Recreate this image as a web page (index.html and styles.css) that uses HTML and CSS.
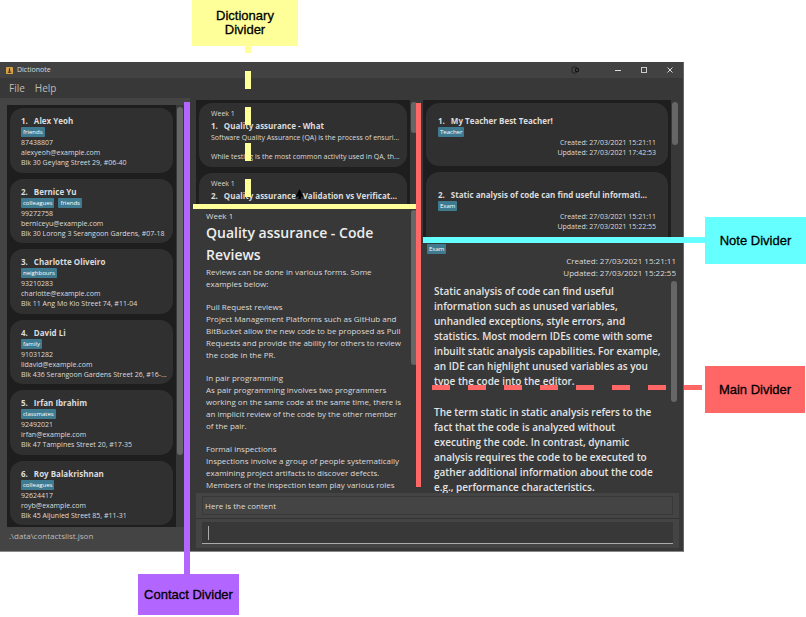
FILE: index.html
```
<!DOCTYPE html>
<html lang="en">
<head>
<meta charset="utf-8">
<title>Dictionote</title>
<link rel="stylesheet" href="styles.css">
</head>
<body>
<div class="page">
  <main class="window">
    <header class="titlebar">
      <svg class="app-icon" viewBox="0 0 8 8"><rect width="8" height="8" rx="1" fill="#d9a34a"/><path d="M4 1.5v3M2 6h4M3 4.5h2" stroke="#3a2a12" stroke-width="1.2"/></svg>
      <span class="app-name">Dictionote</span>
      <svg class="capture" viewBox="0 0 8 8"><rect x="1" y="1" width="5" height="6" rx="1" fill="none" stroke="#222"/><rect x="4" y="2" width="4" height="4" rx="1" fill="#151515"/><rect x="5.500" y="3.500" width="1" height="1" fill="#aaa"/></svg>
      <button class="win-btn" aria-label="Minimize"><svg viewBox="0 0 8 8"><path d="M1 4.5h6" stroke="#ddd"/></svg></button>
      <button class="win-btn" aria-label="Maximize"><svg viewBox="0 0 8 8"><rect x="1.5" y="1.5" width="5" height="5" fill="none" stroke="#ccc"/></svg></button>
      <button class="win-btn" aria-label="Close"><svg viewBox="0 0 8 8"><path d="M1.5 1.5l5 5M6.500 1.500l-5 5" stroke="#ddd"/></svg></button>
    </header>
    <nav class="menubar"><button>File</button><button>Help</button></nav>
    <div class="content">
      <aside class="contacts">
        <div class="scroll-pane">
          <div class="list contact-list">
            <article class="card"><h2><span class="num">1.</span>Alex Yeoh</h2><div class="tags"><span class="tag">friends</span></div><p>87438807</p><p>alexyeoh@example.com</p><p>Blk 30 Geylang Street 29, #06-40</p></article>
            <article class="card"><h2><span class="num">2.</span>Bernice Yu</h2><div class="tags"><span class="tag">colleagues</span><span class="tag">friends</span></div><p>99272758</p><p>berniceyu@example.com</p><p>Blk 30 Lorong 3 Serangoon Gardens, #07-18</p></article>
            <article class="card"><h2><span class="num">3.</span>Charlotte Oliveiro</h2><div class="tags"><span class="tag">neighbours</span></div><p>93210283</p><p>charlotte@example.com</p><p>Blk 11 Ang Mo Kio Street 74, #11-04</p></article>
            <article class="card"><h2><span class="num">4.</span>David Li</h2><div class="tags"><span class="tag">family</span></div><p>91031282</p><p>lidavid@example.com</p><p>Blk 436 Serangoon Gardens Street 26, #16-...</p></article>
            <article class="card"><h2><span class="num">5.</span>Irfan Ibrahim</h2><div class="tags"><span class="tag">classmates</span></div><p>92492021</p><p>irfan@example.com</p><p>Blk 47 Tampines Street 20, #17-35</p></article>
            <article class="card"><h2><span class="num">6.</span>Roy Balakrishnan</h2><div class="tags"><span class="tag">colleagues</span></div><p>92624417</p><p>royb@example.com</p><p>Blk 45 Aljunied Street 85, #11-31</p></article>
          </div>
          <div class="track"><div class="thumb contact-thumb"></div></div>
        </div>
        <footer class="status">.\data\contactslist.json</footer>
      </aside>
      <section class="workspace">
        <div class="panes">
          <section class="dictionary">
            <div class="scroll-pane dict-top">
              <div class="list">
                <article class="card entry"><p>Week 1</p><h2><span class="num">1.</span>Quality assurance - What</h2><p>Software Quality Assurance (QA) is the process of ensuri...</p><p class="spaced">While testing is the most common activity used in QA, th...</p></article>
                <article class="card entry"><p>Week 1</p><h2><span class="num">2.</span>Quality assurance - Validation vs Verificat...</h2></article>
              </div>
              <div class="track"><div class="thumb dict-thumb"></div></div>
            </div>
            <div class="scroll-pane reader">
              <div class="reading">
                <p>Week 1</p>
                <h1>Quality assurance - Code<br>Reviews</h1>
                <p>Reviews can be done in various forms. Some<br>examples below:</p>
                <p>Pull Request reviews<br>Project Management Platforms such as GitHub and<br>BitBucket allow the new code to be proposed as Pull<br>Requests and provide the ability for others to review<br>the code in the PR.</p>
                <p>In pair programming<br>As pair programming involves two programmers<br>working on the same code at the same time, there is<br>an implicit review of the code by the other member<br>of the pair.</p>
                <p>Formal inspections<br>Inspections involve a group of people systematically<br>examining project artifacts to discover defects.<br>Members of the inspection team play various roles</p>
              </div>
              <div class="track"><div class="thumb reader-thumb"></div></div>
            </div>
          </section>
          <section class="notes">
            <div class="scroll-pane note-top">
              <div class="list">
                <article class="card note"><h2><span class="num">1.</span>My Teacher Best Teacher!</h2><div class="tags"><span class="tag">Teacher</span></div><p class="date">Created: 27/03/2021 15:21:11</p><p class="date">Updated: 27/03/2021 17:42:53</p></article>
                <article class="card note tall"><h2><span class="num">2.</span>Static analysis of code can find useful informati...</h2><div class="tags"><span class="tag">Exam</span></div><p class="date">Created: 27/03/2021 15:21:11</p><p class="date">Updated: 27/03/2021 15:22:55</p></article>
              </div>
              <div class="track"><div class="thumb note-thumb"></div></div>
            </div>
            <div class="note-view">
              <div class="tags"><span class="tag">Exam</span></div>
              <p class="stamp">Created: 27/03/2021 15:21:11</p>
              <p class="stamp">Updated: 27/03/2021 15:22:55</p>
              <div class="scroll-pane note-body">
                <div class="note-text">
                  <p>Static analysis of code can find useful<br>information such as unused variables,<br>unhandled exceptions, style errors, and<br>statistics. Most modern IDEs come with some<br>inbuilt static analysis capabilities. For example,<br>an IDE can highlight unused variables as you<br>type the code into the editor.</p>
                  <p>The term static in static analysis refers to the<br>fact that the code is analyzed without<br>executing the code. In contrast, dynamic<br>analysis requires the code to be executed to<br>gather additional information about the code<br>e.g., performance characteristics.</p>
                </div>
                <div class="track"><div class="thumb body-thumb"></div></div>
              </div>
            </div>
          </section>
        </div>
        <div class="result"><output>Here is the content</output></div>
        <div class="command"><input type="text" aria-label="Command"><span class="caret"></span></div>
      </section>
    </div>
  </main>
  <svg class="cursor" viewBox="0 0 8 10"><path d="M4 0L8 8L5.500 7.500V10H3V7.500L0 8Z" fill="#000"/></svg>
  <div class="line dict-stem"></div>
  <div class="line dict-line"></div>
  <div class="line main-line"></div>
  <div class="line main-stem"></div>
  <div class="line contact-line"></div>
  <div class="line note-line"></div>
  <div class="label dict-label">Dictionary<br>Divider</div>
  <div class="label note-label">Note Divider</div>
  <div class="label main-label">Main Divider</div>
  <div class="label contact-label">Contact Divider</div>
</div>
</body>
</html>
```
FILE: styles.css
```
* { box-sizing: border-box; }
body { margin: 0; background: #fff; font-family: "Open Sans", "Noto Sans", sans-serif; }
h1, h2, p { margin: 0; font-weight: inherit; }
button { border: 0; padding: 0; background: none; color: inherit; font: inherit; }

.page { position: relative; display: flex; height: 100vh; min-height: 480px; padding: 62px 122px 65px 0; overflow: hidden; }
.window { flex: 1; min-width: 0; display: flex; flex-direction: column; background: #383838; color: #dcdcdc; border-bottom: 1px solid #888; border-right: 1px solid #666; white-space: nowrap; font-size: 7px; line-height: 10px; }

.titlebar { display: flex; align-items: center; height: 16px; padding: 0 9px 0 6px; background: #424242; }
.app-icon { width: 7px; height: 7px; margin-right: 4px; }
.app-name { flex: 1; }
.capture { width: 8px; height: 8px; margin-right: 35px; }
.win-btn { display: flex; margin-left: 18px; }
.win-btn:first-of-type { margin-left: 0; }
.win-btn svg { width: 8px; height: 8px; }
.menubar { display: flex; gap: 10px; height: 20px; padding: 0 9px; font-size: 10px; color: #bdbdbd; }

.content { flex: 1; min-height: 0; display: flex; gap: 6px; }
.contacts { width: 190px; display: flex; flex-direction: column; padding: 7px 6px 0 7px; background: #444; }
.scroll-pane { flex: 1; min-height: 0; display: flex; overflow: hidden; }
.list { flex: 1; min-width: 0; display: flex; flex-direction: column; gap: 6px; padding: 3px; background: #1e1e1e; overflow: hidden; }
.track { width: 8px; flex-shrink: 0; padding: 2px 1px; background: #383838; }
.thumb { border-radius: 3px; background: #666; }
.contact-list { padding-bottom: 2px; }
.contact-thumb { height: 348px; }
.status { height: 24px; padding: 4px 2px; font-size: 8px; color: #bdbdbd; }

.card { flex-shrink: 0; overflow: hidden; border-radius: 13px; background: #303030; padding: 7px 8px 0 11px; }
.contact-list .card { flex: 1 1 0; min-height: 60px; }
.card h2 { font-size: 8px; font-weight: 700; line-height: 11px; }
.num { margin-right: 6px; }
.tags { display: flex; gap: 4px; height: 12px; padding-top: 1px; }
.tag { height: 10px; padding: 0 2px; border-radius: 1px; background: #3e7b91; color: #fff; font-size: 6px; line-height: 10px; }

.workspace { flex: 1; min-width: 0; display: flex; flex-direction: column; padding: 2px 4px 3px 0; }
.panes { flex: 1; min-height: 0; display: flex; gap: 5px; }
.dictionary { flex: 222; min-width: 0; display: flex; flex-direction: column; }
.notes { flex: 256; min-width: 0; display: flex; flex-direction: column; }
.dict-top { flex: 0 0 106px; }
.entry { height: 64px; padding-top: 6px; padding-left: 12px; }
.entry h2 { line-height: 14px; }
.spaced { margin-top: 9px; }
.dict-thumb { height: 31px; }
.reader-thumb { height: 155px; }
.reader .track { padding-top: 4px; }
.reading { flex: 1; min-width: 0; padding: 4px 0 0 10px; font-size: 8px; line-height: 12px; }
.reading h1 { font-size: 14px; font-weight: 600; line-height: 22px; color: #eee; }
.reading p + p { margin-top: 11px; }

.note-top { flex: 0 0 140px; }
.note { height: 63px; padding: 12px 12px 0; }
.tall { height: 80px; padding-top: 17px; }
.date { text-align: right; }
.note-thumb { height: 43px; }
.note-view { flex: 1; min-height: 0; display: flex; flex-direction: column; padding: 3px 1px 0 4px; }
.stamp { padding-right: 2px; text-align: right; font-size: 8px; line-height: 12px; }
.note-text { flex: 1; min-width: 0; padding: 5px 0 0 7px; font-size: 10px; line-height: 15px; font-weight: 600; color: #e4e4e4; }
.note-text p + p { margin-top: 16px; }
.body-thumb { height: 121px; }

.result { height: 26px; padding: 3px 6px 4px; background: #444; border-bottom: 1px solid #333; }
.result output { display: block; padding: 0 2px; border: 1px solid #383838; font-size: 8px; line-height: 17px; }
.command { position: relative; height: 29px; padding: 3px 6px 4px; background: #444; }
.command input { display: block; width: 100%; height: 22px; border: 0; border-bottom: 1px solid #aaa; background: #383838; color: #fff; font: inherit; }
.caret { position: absolute; left: 12px; top: 7px; width: 1px; height: 14px; background: #aaa; }

/* Callouts drawn over the window */
.line, .label, .cursor { position: absolute; }
.cursor { left: 295px; top: 189px; width: 9px; height: 10px; }
.dict-stem { left: 245px; top: 35px; width: 6px; height: 163px; background: repeating-linear-gradient(#ff9 0 18px, transparent 18px 36px); }
.dict-line { left: 193px; top: 204px; width: 223px; height: 5px; background: #ff9; }
.main-line { left: 416px; top: 103px; width: 5px; height: 384px; background: #f66; }
.main-stem { left: 432px; top: 385px; width: 271px; height: 5px; background: repeating-linear-gradient(90deg, #f66 0 18px, transparent 18px 36px); }
.contact-line { left: 184px; top: 102px; width: 6px; height: 473px; background: #b266ff; }
.note-line { left: 423px; top: 237px; width: 283px; height: 6px; background: #6ff; }
.label { display: flex; align-items: center; justify-content: center; text-align: center; color: #000; font: 13px/14px "Liberation Sans", Arial, sans-serif; -webkit-text-stroke: 0.3px #000; }
.dict-label { left: 192px; top: 0; width: 106px; height: 46px; background: #ff9; }
.note-label { left: 705px; top: 217px; width: 101px; height: 47px; background: #6ff; }
.main-label { left: 705px; top: 366px; width: 100px; height: 47px; background: #f66; }
.contact-label { left: 138px; top: 574px; width: 101px; height: 41px; background: #b266ff; }
```
